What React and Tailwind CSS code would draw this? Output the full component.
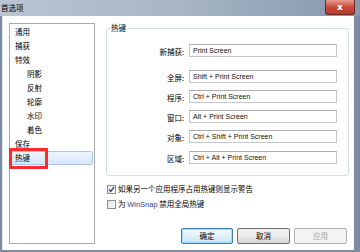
import { useState } from "react";

const cjk = { fontFamily: '"Noto Sans CJK SC", "Noto Sans", sans-serif' };

const items = [
  { label: "通用", sub: false },
  { label: "捕获", sub: false },
  { label: "特效", sub: false },
  { label: "阴影", sub: true },
  { label: "反射", sub: true },
  { label: "轮廓", sub: true },
  { label: "水印", sub: true },
  { label: "着色", sub: true },
  { label: "保存", sub: false },
  { label: "热键", sub: false },
];

const hotkeys = [
  { label: "新捕获:", value: "Print Screen", mt: "mt-0" },
  { label: "全屏:", value: "Shift + Print Screen", mt: "mt-[13px]" },
  { label: "程序:", value: "Ctrl + Print Screen", mt: "mt-[7px]" },
  { label: "窗口:", value: "Alt + Print Screen", mt: "mt-[7px]" },
  { label: "对象:", value: "Ctrl + Shift + Print Screen", mt: "mt-[7px]" },
  { label: "区域:", value: "Ctrl + Alt + Print Screen", mt: "mt-[8px]" },
];

function Checkbox({ checked, children, className }) {
  return (
    <div className={`flex items-center h-[10px] ${className}`}>
      <span className="w-[9px] h-[9px] border border-[#8f8f8f] bg-gradient-to-br from-[#e4e4e4] to-[#fbfbfb] flex items-center justify-center">
        {checked && (
          <svg width="7" height="7" viewBox="0 0 7 7">
            <path d="M1 3.5 L2.8 5.5 L6 1" fill="none" stroke="#2a4f9a" strokeWidth="1.4" />
          </svg>
        )}
      </span>
      <span className="ml-[2px] text-[7.5px] leading-[10px] text-black">{children}</span>
    </div>
  );
}

export default function App() {
  const [selected] = useState("热键");

  return (
    <div className="w-[360px] h-[252px] flex flex-col bg-[#7d8ca0] overflow-hidden" style={cjk}>
      {/* title bar */}
      <div className="h-[16px] flex items-start justify-between bg-gradient-to-r from-[#b9c5d3] via-[#a7b5c6] to-[#8797ac]">
        <span className="ml-[1px] mt-[3px] text-[7.5px] leading-[10px] text-black">首选项</span>
        <div className="mr-[5px] w-[30px] h-[15px] rounded-b-[3px] border border-t-0 border-[#6b2a2a] bg-gradient-to-b from-[#e69a8c] via-[#c9493a] to-[#b83b2c] flex items-center justify-center">
          <span className="text-white text-[9px] font-bold leading-none" style={{ fontFamily: '"DejaVu Sans", sans-serif' }}>x</span>
        </div>
      </div>

      {/* dialog body */}
      <div className="flex-1 ml-[2px] mr-[6px] mb-[2px] bg-white flex border-l border-[#dfe6ee] relative">
        {/* category list */}
        <div className="ml-[6px] mt-[7px] w-[86px] h-[221px] border border-[#a9a9a9] bg-white pt-[1px]">
          {items.map((it) => (
            <div
              key={it.label}
              className={`h-[14px] mx-[1px] flex items-center text-[7.5px] leading-[10px] text-black ${
                it.sub ? "pl-[15px]" : "pl-[3px]"
              } ${
                selected === it.label
                  ? "rounded-[2px] border border-[#a9c8ec] bg-gradient-to-b from-[#eef5fd] to-[#d6e7fa]"
                  : "border border-transparent"
              }`}
            >
              {it.label}
            </div>
          ))}
        </div>

        {/* red marker around selected item */}
        <div className="absolute left-[6px] top-[132px] w-[39px] h-[21px] border-[3px] border-[#ff2b2b]" />

        {/* right side */}
        <div className="ml-[11px] flex flex-col w-[243px]">
          <div className="mt-[12px] h-[148px] border border-[#d5dfe5] rounded-[3px] relative pt-[15px]">
            <span className="absolute left-[3px] top-[-6px] bg-white px-[1px] text-[7.5px] leading-[10px] text-black">热键</span>
            {hotkeys.map((h) => (
              <div key={h.label} className={`flex items-center h-[13px] ${h.mt}`}>
                <span className="w-[77px] text-right text-[7.5px] leading-[10px] text-black pt-[3px]">{h.label}</span>
                <div className="ml-[5px] w-[148px] h-[13px] border border-[#c3c8cf] border-t-[#abadb3] bg-white flex items-center pl-[3px]">
                  <span className="text-[7px] leading-none text-[#111]" style={{ fontFamily: '"Liberation Sans", Arial, sans-serif' }}>
                    {h.value}
                  </span>
                </div>
              </div>
            ))}
          </div>

          <Checkbox checked className="mt-[8px] ml-[1px]">
            如果另一个应用程序占用热键则显示警告
          </Checkbox>
          <Checkbox className="mt-[5px] ml-[1px]">
            为 <span className="text-[#3a3a8c]" style={{ fontFamily: '"Liberation Sans", Arial, sans-serif' }}>WinSnap</span> 禁用全局热键
          </Checkbox>

          <div className="mt-auto mb-[6px] mr-[2px] flex justify-end gap-[4px]">
            <button className="w-[52px] h-[16px] rounded-[2px] border border-[#3c7fb1] bg-gradient-to-b from-[#f2f8fd] via-[#e3f0fb] to-[#c6e0f5] text-[7.5px] leading-none text-black shadow-[inset_0_0_0_1px_#9fdcf8]">
              确定
            </button>
            <button className="w-[53px] h-[16px] rounded-[2px] border border-[#707070] bg-gradient-to-b from-[#f2f2f2] via-[#ebebeb] to-[#d5d5d5] text-[7.5px] leading-none text-black">
              取消
            </button>
            <button className="w-[53px] h-[16px] rounded-[2px] border border-[#adb2b5] bg-[#f4f4f4] text-[7.5px] leading-none text-[#a0a0a0]">
              应用
            </button>
          </div>
        </div>
      </div>
    </div>
  );
}
